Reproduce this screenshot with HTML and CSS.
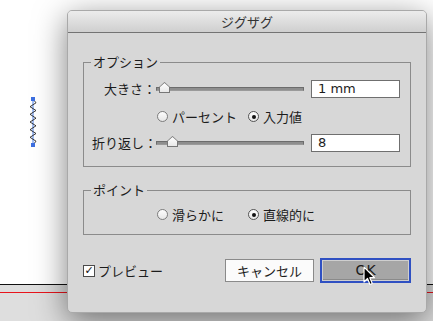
FILE: index.html
```html
<!DOCTYPE html>
<html lang="ja">
<head>
    <meta charset="UTF-8">
    <title>ジグザグ</title>
    <link rel="stylesheet" href="styles.css">
</head>
<body>

    <div class="canvas">
        <div class="artboard">
            <svg class="path-zigzag" width="12" height="52" viewBox="0 0 12 52">
                <line x1="6" y1="3" x2="6" y2="49" stroke="#4a7ee8" stroke-width="1"/>
                <polyline fill="none" stroke="#222" stroke-width="0.9"
                    points="6,3 9,6.8 3,10.7 9,14.5 3,18.3 9,22.2 3,26 9,29.8 3,33.7 9,37.5 3,41.3 9,45.2 6,49"/>
                <rect x="4" y="1" width="4" height="4" fill="#3d6fe0"/>
                <rect x="4" y="47" width="4" height="4" fill="#3d6fe0"/>
            </svg>
        </div>
        <div class="pasteboard">
            <div class="guide"></div>
        </div>
    </div>

    <div class="dialog">
        <div class="titlebar">ジグザグ</div>
        <div class="dialog-body">

            <div class="group">
                <div class="group-title">オプション</div>
                <div class="option-grid">
                    <div class="field-label">大きさ：</div>
                    <div class="slider"><span class="thumb thumb-size"></span></div>
                    <div class="text-field">1 mm</div>

                    <div class="options options-wide">
                        <label class="radio"><span class="radio-mark"></span>パーセント</label>
                        <label class="radio"><span class="radio-mark checked"></span>入力値</label>
                    </div>

                    <div class="field-label">折り返し：</div>
                    <div class="slider"><span class="thumb thumb-ridges"></span></div>
                    <div class="text-field">8</div>
                </div>
            </div>

            <div class="group group-points">
                <div class="group-title">ポイント</div>
                <div class="options options-points">
                    <label class="radio"><span class="radio-mark"></span>滑らかに</label>
                    <label class="radio"><span class="radio-mark checked"></span>直線的に</label>
                </div>
            </div>

            <div class="footer">
                <label class="checkbox"><span class="check-mark">✓</span>プレビュー</label>
                <div class="buttons">
                    <div class="button">キャンセル</div>
                    <div class="button button-default">OK</div>
                </div>
            </div>

        </div>

        <!-- マウスカーソル -->
        <svg class="cursor" width="13" height="20" viewBox="0 0 13 20">
            <path d="M1 1 L1 16 L4.5 12.5 L7 18.5 L9.3 17.5 L6.8 11.7 L11.5 11.7 Z"
                fill="#000" stroke="#fff" stroke-width="1.2" stroke-linejoin="round"/>
        </svg>
    </div>

</body>
</html>
```

FILE: styles.css
```css
body {
    margin: 0;
    width: 433px;
    height: 321px;
    overflow: hidden;
    position: relative;
    font-family: "Noto Sans CJK JP", "Liberation Sans", sans-serif;
    font-size: 13px;
    color: #1c1c1c;
}

.canvas {
    display: flex;
    flex-direction: column;
    height: 100%;
}

.artboard {
    height: 284px;
    background-color: #fff;
    border-bottom: 1px solid #111;
    position: relative;
}

.path-zigzag {
    position: absolute;
    left: 27px;
    top: 96px;
}

.pasteboard {
    flex: 1;
    background-color: #dedede;
    padding-top: 7px;
}

.guide {
    height: 1px;
    background-color: #e8141c;
}

.dialog {
    position: absolute;
    left: 67px;
    top: 10px;
    width: 360px;
    height: 303px;
    box-sizing: border-box;
    background-color: #d7d7d7;
    border: 1px solid #a9a9a9;
    border-radius: 5px;
    box-shadow: 0 8px 32px rgba(0, 0, 0, 0.5);
    overflow: hidden;
}

.titlebar {
    height: 21px;
    line-height: 21px;
    text-align: center;
    color: #333;
    background: linear-gradient(#ececec, #cfcfcf);
    border-bottom: 1px solid #737373;
}

.dialog-body {
    padding: 29px 15px 0 15px;
}

.group {
    border: 1px solid #8b8b8b;
    padding: 0 10px 14px 8px;
}

.group-title {
    width: fit-content;
    margin: -9px 0 0 -1px;
    padding: 0 2px;
    line-height: 16px;
    background-color: #d7d7d7;
}

.option-grid {
    display: grid;
    grid-template-columns: 64px 148px 96px;
    grid-auto-rows: 18px;
    row-gap: 9px;
    margin-top: 10px;
    align-items: center;
}

.option-grid .text-field {
    margin-left: 7px;
}

.field-label {
    text-align: right;
    white-space: nowrap;
    line-height: 18px;
}

.slider {
    position: relative;
    height: 2px;
    background-color: #8e8e8e;
    border: 1px solid #6c6c6c;
    border-bottom-color: #9a9a9a;
}

.thumb {
    position: absolute;
    top: -6px;
    width: 11px;
    height: 11px;
    background: #777;
    clip-path: polygon(50% 0, 100% 45%, 100% 100%, 0 100%, 0 45%);
}

.thumb::before {
    content: "";
    position: absolute;
    inset: 1px;
    background: linear-gradient(#ffffff, #e8e8e8);
    clip-path: polygon(50% 0, 100% 45%, 100% 100%, 0 100%, 0 45%);
}

.thumb-size {
    left: 2px;
}

.thumb-ridges {
    left: 10px;
}

.text-field {
    height: 18px;
    box-sizing: border-box;
    background-color: #fff;
    border: 1px solid #6f6f6f;
    padding-left: 6px;
    font-family: "DejaVu Sans", "Liberation Sans", sans-serif;
    font-size: 13px;
    line-height: 16px;
}

.options {
    display: grid;
    grid-template-columns: 91px auto;
    align-items: center;
    height: 18px;
}

.options-wide {
    grid-column: 2 / 4;
    margin-left: 1px;
}

.radio {
    display: flex;
    align-items: center;
    gap: 4px;
    white-space: nowrap;
}

.radio-mark {
    width: 11px;
    height: 11px;
    box-sizing: border-box;
    border: 1px solid #7d7d7d;
    border-radius: 50%;
    background: linear-gradient(#fdfdfd, #e6e6e6);
    display: flex;
    align-items: center;
    justify-content: center;
}

.radio-mark.checked {
    border-color: #555;
}

.radio-mark.checked::after {
    content: "";
    width: 4px;
    height: 4px;
    border-radius: 50%;
    background-color: #111;
}

.group-points {
    margin-top: 23px;
    padding-bottom: 11px;
}

.options-points {
    margin: 7px 0 0 65px;
}

.footer {
    display: flex;
    justify-content: space-between;
    align-items: center;
    margin-top: 23px;
    height: 25px;
}

.checkbox {
    display: flex;
    align-items: center;
    gap: 3px;
}

.check-mark {
    width: 12px;
    height: 12px;
    box-sizing: border-box;
    border: 1px solid #4a4a4a;
    background-color: #fff;
    font-family: "DejaVu Sans", sans-serif;
    font-size: 11px;
    font-weight: bold;
    line-height: 10px;
    text-align: center;
    color: #111;
}

.buttons {
    display: flex;
    align-items: center;
    gap: 6px;
}

.button {
    width: 89px;
    height: 23px;
    box-sizing: border-box;
    border: 1px solid #8a8a8a;
    background-color: #fbfbfb;
    text-align: center;
    line-height: 21px;
}

.button-default {
    width: 91px;
    height: 25px;
    border: 2px solid #2f50c2;
    background-color: #a6a6a6;
    box-shadow: inset 0 0 0 1px #cfcfcf, inset 0 -2px 0 #8a8a8a;
    font-family: "DejaVu Sans", "Liberation Sans", sans-serif;
    font-size: 14px;
}

.cursor {
    position: absolute;
    left: 295px;
    top: 255px;
}
```
